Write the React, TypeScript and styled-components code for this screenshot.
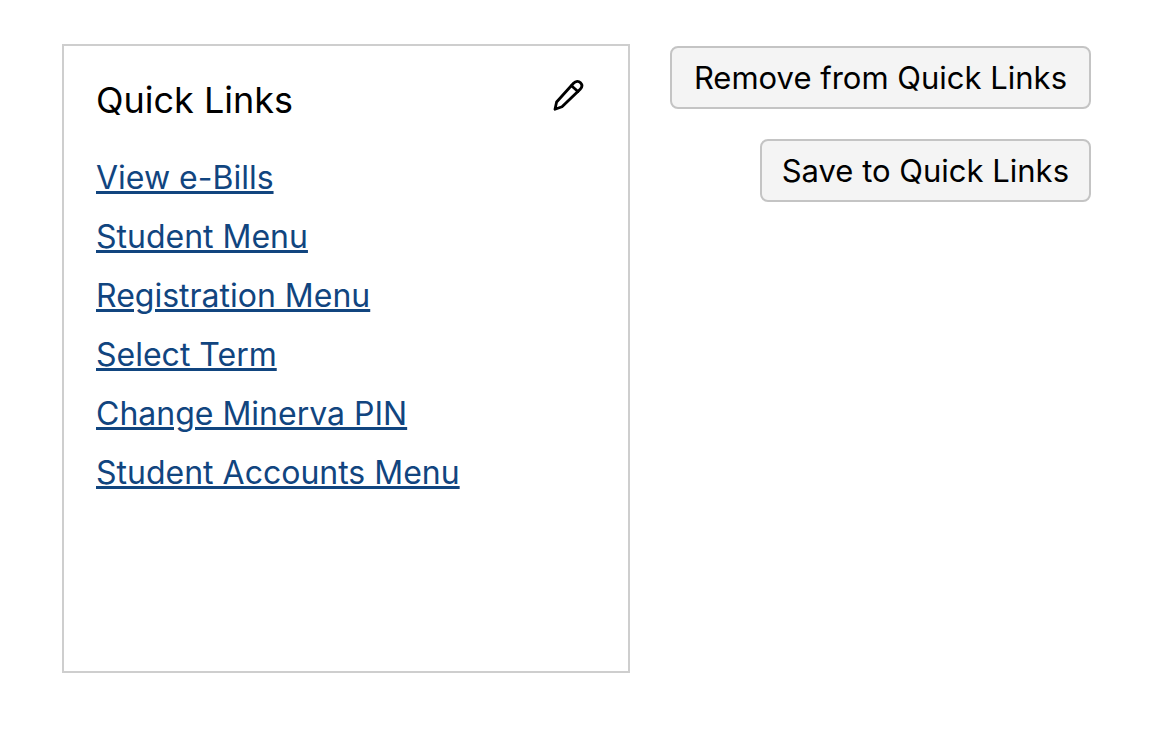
import React from "react";
import styled, { createGlobalStyle } from "styled-components";

const GlobalStyle = createGlobalStyle`
  * { box-sizing: border-box; }
  body {
    margin: 0;
    background: #fff;
    color: #000;
    font-family: Inter, "Liberation Sans", sans-serif;
  }
`;

const Page = styled.main`
  display: grid;
  grid-template-columns: minmax(0, 568fr) minmax(0, 421fr);
  align-items: start;
  gap: 40px;
  padding: 44px 59px 62px 62px;
`;

const Card = styled.section`
  min-height: 629px;
  padding: 32px;
  border: 2px solid #cecece;
`;

const CardHeader = styled.header`
  display: flex;
  align-items: flex-start;
  justify-content: space-between;
  padding-right: 12px;
`;

const Title = styled.h2`
  margin: 0;
  font-size: 36px;
  font-weight: 400;
  line-height: 44px;
`;

const IconButton = styled.button`
  display: flex;
  padding: 0;
  border: 0;
  background: none;
  color: #000;
  cursor: pointer;
`;

const LinkList = styled.ul`
  display: flex;
  flex-direction: column;
  gap: 19px;
  margin: 36px 0 0;
  padding: 0;
  list-style: none;
`;

const LinkItem = styled.li`
  font-size: 32px;
  line-height: 40px;
`;

const QuickLink = styled.a`
  color: #11457f;
  text-decoration: underline;
`;

const Actions = styled.div`
  display: flex;
  flex-direction: column;
  align-items: flex-end;
  gap: 30px;
  padding-top: 2px;
`;

const ActionButton = styled.button<{ $compact?: boolean }>`
  padding: 11px ${({ $compact }) => ($compact ? "20px" : "22px")};
  border: 2px solid #c4c4c4;
  border-radius: 8px;
  background: #f4f4f4;
  color: #000;
  font-family: inherit;
  font-size: 31px;
  line-height: 37px;
  white-space: nowrap;
  cursor: pointer;
`;

const links = [
  "View e-Bills",
  "Student Menu",
  "Registration Menu",
  "Select Term",
  "Change Minerva PIN",
  "Student Accounts Menu",
];

function PencilIcon() {
  return (
    <svg
      width="32"
      height="36"
      viewBox="0 0 32 36"
      fill="none"
      stroke="currentColor"
      strokeWidth="2.8"
      strokeLinejoin="round"
      strokeLinecap="round"
      aria-hidden="true"
    >
      <path d="M3 31.200 4.600 24 21.500 5.300C23.800 2.900 26.700 2.900 28.500 4.800C30.300 6.700 30.300 9.200 28.200 11.300L10 28.800Z" />
      <path d="M19.500 7.800 25.900 13.500" />
    </svg>
  );
}

export default function App() {
  return (
    <>
      <GlobalStyle />
      <Page>
        <Card aria-labelledby="quick-links-title">
          <CardHeader>
            <Title id="quick-links-title">Quick Links</Title>
            <IconButton type="button" aria-label="Edit quick links">
              <PencilIcon />
            </IconButton>
          </CardHeader>
          <LinkList>
            {links.map((label) => (
              <LinkItem key={label}>
                <QuickLink href="#">{label}</QuickLink>
              </LinkItem>
            ))}
          </LinkList>
        </Card>
        <Actions>
          <ActionButton type="button">Remove from Quick Links</ActionButton>
          <ActionButton type="button" $compact>Save to Quick Links</ActionButton>
        </Actions>
      </Page>
    </>
  );
}
